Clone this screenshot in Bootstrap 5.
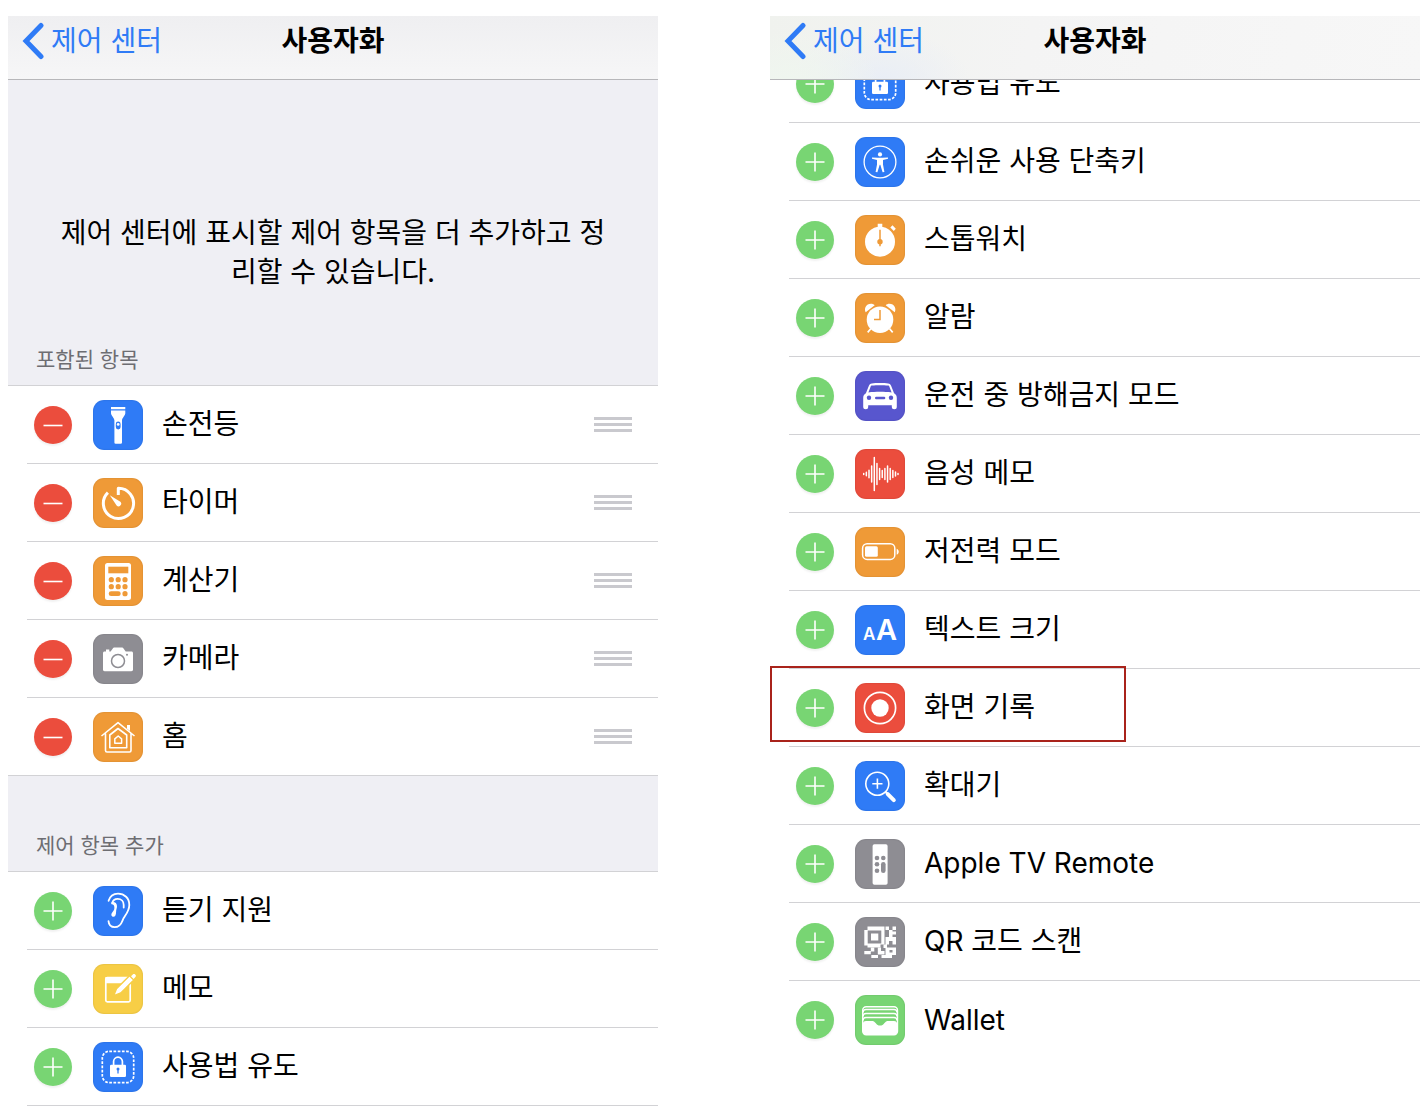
<!DOCTYPE html>
<html lang="ko">
<head>
<meta charset="utf-8">
<meta name="viewport" content="width=device-width, initial-scale=1">
<title>제어 센터 사용자화</title>
<link rel="stylesheet" href="https://cdn.jsdelivr.net/npm/bootstrap@5.3.0/dist/css/bootstrap.min.css">
<style>
  :root { --ios-blue:#2f7bf6; --ios-orange:#ef9a37; --ios-gray:#8e8d93; --ios-green:#78d573; --ios-red:#eb4d3d; --ios-indigo:#5856ce; --ios-yellow:#f7ce46; --hairline:#d2d2d5; }
  body { font-family: Inter, "Noto Sans CJK KR", sans-serif; color:#000; background:#fff; }
  .screens { height:100vh; gap:112px; padding:16px 0 0 8px; overflow:hidden; }
  .phone { flex:1 1 0; min-width:0; overflow:hidden; }
  .topbar { height:64px; background:linear-gradient(#efeff1,#f6f6f7); border-bottom:1px solid #b7b7ba; z-index:2; display:grid; grid-template-columns:1fr auto 1fr; align-items:start; padding:4px 14px 0; }
  .topbar-tinted { background:radial-gradient(ellipse 90px 50px at 20px 64px,#eff6ef,transparent),radial-gradient(ellipse 90px 50px at 110px 64px,#e9eef6,transparent),linear-gradient(100deg,#f0f2ee,#f4f4f4 40%,#f7f7f7); }
  .back-link { color:var(--ios-blue); font-size:28px; line-height:42px; gap:7px; }
  .screen-title { font-size:28px; line-height:42px; font-weight:600; }
  .panel-gray { background:#efeff4; border-bottom:1px solid var(--hairline); }
  .intro { height:306px; }
  .intro-text { font-size:28px; line-height:39px; padding-top:134px; }
  .group-label { font-size:21px; line-height:30px; font-weight:400; color:#6d6d72; padding:0 28px 10px; }
  .group-gap { height:96px; }
  .ctl-list > li { height:78px; margin-left:19px; padding-left:7px; border-bottom:1px solid var(--hairline); }
  .ctl-list.last-full > li:last-child { margin-left:0; padding-left:26px; }
  .ctl-list.last-none > li:last-child { border-bottom:0; }
  .ctl-list.scrolled { margin-top:-35px; }
  .round-btn { width:38px; height:38px; margin-right:21px; border-radius:50%; box-shadow:0 2px 2px #0000000f; }
  .round-btn svg, .app-icon { display:block; }
  .add-btn { background:var(--ios-green); }
  .remove-btn { background:var(--ios-red); }
  .app-icon { width:50px; height:50px; border-radius:11px; margin-right:19px; box-shadow:inset 0 0 1px 1px #0000000d; }
  .bg-blue { background:var(--ios-blue); color:var(--ios-blue); }
  .bg-orange { background:var(--ios-orange); color:var(--ios-orange); }
  .bg-gray { background:var(--ios-gray); color:var(--ios-gray); }
  .bg-green { background:var(--ios-green); color:var(--ios-green); }
  .bg-red { background:var(--ios-red); color:var(--ios-red); }
  .bg-indigo { background:var(--ios-indigo); color:var(--ios-indigo); }
  .bg-yellow { background:var(--ios-yellow); color:var(--ios-yellow); }
  .ctl-name { font-size:28px; line-height:40px; padding-bottom:1px; white-space:nowrap; }
  .grip { width:38px; height:15px; margin-right:26px; border:0; padding:0; background:repeating-linear-gradient(#c9c9ce 0 3px,transparent 3px 6px); }
  .callout { position:absolute; left:-19px; top:-3px; width:356px; height:76px; border:2px solid #a9231b; pointer-events:none; }
</style>
</head>
<body>
<svg width="0" height="0" class="d-none" aria-hidden="true">
  <symbol id="plus" viewBox="0 0 38 38"><path d="M9.500 19h19M19 9.500v19" stroke="#fff" stroke-width="1.600"/></symbol>
  <symbol id="minus" viewBox="0 0 38 38"><path d="M9.500 19.500h19" stroke="#fff" stroke-width="1.600"/></symbol>
  <symbol id="torch" viewBox="0 0 50 50"><path fill="#fff" d="M18 7h14.300v2.300H18zM18 10.600h14.300v2.700c0 2-3.300 5-3.300 7V42.500a1.300 1.300 0 0 1-1.300 1.300h-5a1.300 1.300 0 0 1-1.300-1.300V20.300c0-2-3.400-5-3.400-7z"/><rect x="22.800" y="21.500" width="4.800" height="8" rx="2.400" fill="currentColor"/><circle cx="25.200" cy="24.400" r="1.400" fill="#fff"/></symbol>
  <symbol id="timer" viewBox="0 0 50 50"><path d="M25.300 17v-6.700a15.100 15.100 0 1 1-10.400 4.300" fill="none" stroke="#fff" stroke-width="3" stroke-linejoin="round"/><path d="M16.800 17.300l10.600 6.500a2.500 2.500 0 1 1-3.800 3.700z" fill="#fff"/></symbol>
  <symbol id="calc" viewBox="0 0 50 50"><rect x="12" y="7" width="26" height="37" rx="2.500" fill="#fff"/><g fill="currentColor"><rect x="15.300" y="10.700" width="20" height="6.600"/><circle cx="18.300" cy="23.700" r="2.600"/><circle cx="25.200" cy="23.700" r="2.600"/><circle cx="32" cy="23.700" r="2.600"/><circle cx="18.300" cy="30.700" r="2.600"/><circle cx="25.200" cy="30.700" r="2.600"/><circle cx="32" cy="30.700" r="2.600"/><rect x="15.700" y="35.300" width="12" height="4.800" rx="2.400"/><circle cx="32" cy="37.700" r="2.600"/></g></symbol>
  <symbol id="camera" viewBox="0 0 50 50"><path fill="#fff" d="M11.700 17.500h1.300v-2h3.300v2h1.300l2.200-3c.5-.7.900-.9 1.700-.9h7.300c.8 0 1.200.2 1.700.9l2.200 3h5.600c1.200 0 1.700.7 1.700 1.700v16.400c0 1.100-.6 1.700-1.700 1.700H11.700c-1.100 0-1.700-.6-1.700-1.700V19.200c0-1.100.6-1.700 1.700-1.700z"/><circle cx="25" cy="27" r="6.500" fill="none" stroke="currentColor" stroke-width="1.500"/><circle cx="34" cy="20.700" r="1" fill="currentColor"/></symbol>
  <symbol id="home" viewBox="0 0 50 50"><g fill="none" stroke="#fff" stroke-width="1.600" stroke-linejoin="round"><path d="M8.500 24L25 10.600 41.500 24M12.500 21.500V38.500a1.500 1.500 0 0 0 1.500 1.500h22.500a1.500 1.500 0 0 0 1.500-1.500V21.500M16.800 23L25 16.500l8.700 6.500v12.700H16.800z"/><path stroke-width="1.500" d="M21.800 26.800L25.200 24l3.400 2.800v4.500h-6.800z"/></g><path fill="#fff" d="M34 13h3v6l-3-2.300z"/></symbol>
  <symbol id="ear" viewBox="0 0 50 50"><g fill="none" stroke="#fff" stroke-width="1.800" stroke-linecap="round"><path d="M15.600 14.800C17 10 20.300 7.600 25 7.600c6.500 0 11.300 4.600 11.300 11.300 0 5.600-3 9-5.600 13.100-1.700 2.800-2.200 9.200-9 9.200-3.600 0-5.900-2.600-6.200-6"/><path d="M19.200 17.200c.6-2.800 2.600-4.300 5.500-4.300 3.700 0 6 2.500 6 6.100v2.500"/></g><path fill="#fff" d="M18.500 16.300c3-.9 5.300.7 5.500 3.700.1 2-.9 3.600-.9 5.700 0 3-.8 5-2.800 5-1.900 0-2.400-2-1.600-3.500.7-1.300 2.700-2.600 2.700-5.200 0-2.300-.6-3.600-2.900-3.700z"/></symbol>
  <symbol id="memo" viewBox="0 0 50 50"><rect x="12.800" y="13.500" width="24.400" height="24.400" rx="1.600" fill="none" stroke="#fff" stroke-width="1.700"/><path d="M12.500 13h24v6.300h-24z" fill="#fff"/><path d="M20.800 31.600l2.700-6.900L36.500 11.700l4.300 4.300L27.800 29z" fill="#fff" stroke="currentColor" stroke-width="1.400"/><path d="M38 12.300l1.800-1.900c1.600-1.600 4.200 1 2.600 2.600L40.600 15z" fill="#fff"/></symbol>
  <symbol id="guided" viewBox="0 0 50 50"><rect x="9.300" y="9.300" width="31.400" height="31.400" rx="7" fill="none" stroke="#fff" stroke-width="1.700" stroke-dasharray="2.700 1.500"/><rect x="17" y="22.700" width="16" height="12.300" rx="1.300" fill="#fff"/><path d="M20.600 23v-3.400a4.400 4.400 0 0 1 8.800 0V23" fill="none" stroke="#fff" stroke-width="1.700"/><circle cx="25" cy="27" r="1.500" fill="currentColor"/><path d="M25 27v4.500" stroke="currentColor" stroke-width="1.300"/></symbol>
  <symbol id="access" viewBox="0 0 50 50"><circle cx="25" cy="25" r="15.900" fill="none" stroke="#fff" stroke-width="1.300"/><circle cx="25" cy="17.400" r="2.100" fill="#fff"/><path fill="#fff" d="M17 20.400l5.700.3h4.600l5.700-.3v1.400l-5 1.100v4.500l1.400 7.600-1.800.3-2.300-7.600h-.6l-2.300 7.600-1.800-.3 1.400-7.600v-4.500l-5-1.100z"/></symbol>
  <symbol id="stopwatch" viewBox="0 0 50 50"><circle cx="25" cy="26.700" r="15" fill="#fff"/><path fill="#fff" d="M22.700 8.800h4.600v5h-4.600zM35.300 12.500l2.200-2.200 3.300 3.500-2 2.200z"/><path d="M25 14.700v16.600" stroke="currentColor" stroke-width="1.500"/><circle cx="25" cy="26.700" r="2.700" fill="currentColor"/></symbol>
  <symbol id="alarm" viewBox="0 0 50 50"><circle cx="25" cy="26.700" r="13.300" fill="#fff"/><path d="M10.700 19.300c-2-3.500.3-8.600 5.300-8.600 1.500 0 2.700.5 3.700 1.500zM39.700 19.300c2-3.500-.3-8.600-5.300-8.600-1.500 0-2.700.5-3.700 1.500z" fill="#fff"/><path d="M16 35.500l-3.300 3.900M34.400 35.500l3.300 3.900" stroke="#fff" stroke-width="1.700"/><path d="M25 17v9.600h-6" fill="none" stroke="currentColor" stroke-width="1.500"/></symbol>
  <symbol id="car" viewBox="0 0 50 50"><path fill="#fff" fill-rule="evenodd" d="M16.800 12.500c4-.6 12.400-.6 16.400 0 1.600.2 2.400.9 3 2.400l2.900 7.300c2 1.300 2.700 2.500 2.700 4.900v8.700a2.500 2.500 0 0 1-5 0v-1.600H13.200v1.600a2.500 2.500 0 0 1-5 0v-8.700c0-2.400.7-3.600 2.700-4.900l2.900-7.300c.6-1.500 1.400-2.200 3-2.400zM17.200 14.600c-1 .1-1.300.4-1.700 1.400l-2.100 5.400c7-.8 16.200-.8 23.200 0L34.500 16c-.4-1-.7-1.300-1.700-1.400-4-.5-11.600-.5-15.600 0z"/><g fill="currentColor"><circle cx="14" cy="26.800" r="2.200"/><circle cx="36" cy="26.800" r="2.200"/><rect x="20" y="25.800" width="10.300" height="2.400" rx="1.200"/></g></symbol>
  <symbol id="wave" viewBox="0 0 50 50"><path stroke="#fff" stroke-width="1.500" stroke-linecap="round" d="M8.700 24.500v1M11.350 23.300v3.400M14 21.200v7.600M16.650 17v16M19.300 8.500v33M21.950 14.500v21M24.600 19.500v11M27.250 21.500v7M29.900 19.500v11M32.550 17v16M35.200 19.500v11M37.850 21.500v7M40.500 23v4M43 24.500v1"/></symbol>
  <symbol id="battery" viewBox="0 0 50 50"><rect x="7.600" y="16.800" width="32.200" height="15.600" rx="4.500" fill="none" stroke="#fff" stroke-width="1.500"/><rect x="10" y="19.300" width="12.800" height="10.500" rx="1.500" fill="#fff"/><path d="M41.700 21.700c2.700 1 2.700 5 0 6z" fill="#fff"/></symbol>
  <symbol id="textsize" viewBox="0 0 50 50"><text x="8" y="35" font-family="Inter, sans-serif" font-weight="600" font-size="17" fill="#fff">A</text><text x="21" y="35" font-family="Inter, sans-serif" font-weight="600" font-size="29" fill="#fff">A</text></symbol>
  <symbol id="record" viewBox="0 0 50 50"><circle cx="25" cy="25" r="15.600" fill="none" stroke="#fff" stroke-width="1.700"/><circle cx="25" cy="25" r="8.700" fill="#fff"/></symbol>
  <symbol id="magnify" viewBox="0 0 50 50"><circle cx="22.300" cy="22.700" r="11.500" fill="none" stroke="#fff" stroke-width="1.600"/><path d="M17.300 22.700h10.200M22.400 17.600v10.200" stroke="#fff" stroke-width="1.600"/><path d="M30.300 30.700l2 2" stroke="#fff" stroke-width="2"/><path d="M32.800 33.200l6 6" stroke="#fff" stroke-width="4" stroke-linecap="round"/></symbol>
  <symbol id="remote" viewBox="0 0 50 50"><rect x="17.600" y="5.300" width="15" height="40.400" rx="1.800" fill="#fff"/><g fill="currentColor"><circle cx="22" cy="19" r="2.300"/><circle cx="28.300" cy="19" r="2.300"/><circle cx="22" cy="25.300" r="2.300"/><circle cx="22" cy="31.700" r="2.300"/><rect x="26" y="23" width="4.600" height="11" rx="2.300"/></g></symbol>
  <symbol id="qr" viewBox="0 0 50 50"><path fill="#fff" fill-rule="evenodd" d="M12.500 9.500H29.500V27.500H25.500V30.500H12.500V28.500H9.300V13H12.500zM12.700 13.500V26.500H26.300V13.500zM16 16.500H23.300V23.500H16z"/><path fill="#fff" d="M30.500 9.500h3.500V13h-3.500zM37.500 9.500h3.500V13h-3.500zM34 13h3.500v3.500H34zM37.500 14.500h3.500v3h-3.500zM30.500 20h3.500v-3.500h3.500V20H41v7.500h-3.500V24H34v3.500h-3.500zM9.300 34h6.500v3.300H9.300zM15.800 30.500h3.500v4h-3.500zM22.800 30.500H26v3.500h3.500v3.500h-6.700zM16.300 38h6.700v3h-6.700zM26.500 38h10.500v3H26.500zM28.500 27.500h3.500V31h-3.500z"/><path fill="#fff" fill-rule="evenodd" d="M30.500 30.500H41V38H30.500zM34.500 33v2.500h3V33z"/></symbol>
  <symbol id="wallet" viewBox="0 0 50 50"><rect x="7.700" y="11.700" width="34.800" height="28" rx="3.500" fill="none" stroke="#fff" stroke-width="1.400"/><path d="M8 17.500c0-2 1-3 3-3h28c2 0 3 1 3 3M8 21.500c0-2 1-3 3-3h28c2 0 3 1 3 3M8 25.500c0-2 1-3 3-3h28c2 0 3 1 3 3" fill="none" stroke="#fff" stroke-width="1.400"/><path fill="#fff" d="M8 28c.4-1.300 1.300-2 3-2h6.600c2.600 0 3.600 4.600 7.500 4.600s4.800-4.600 7.400-4.600H39c1.700 0 2.600.7 3 2v9.500a2 2 0 0 1-2 2H10a2 2 0 0 1-2-2z"/></symbol>
  <symbol id="chevron" viewBox="0 0 22 38"><path d="M19 3.500L4 19l15 15.500" fill="none" stroke="currentColor" stroke-width="5" stroke-linecap="round" stroke-linejoin="miter"/></symbol>
  <symbol id="blank" viewBox="0 0 50 50"></symbol>
</svg>

<main class="screens d-flex">
  <section class="phone">
    <header class="topbar position-relative">
      <a href="#" class="back-link d-flex align-items-center text-decoration-none"><svg width="22" height="38"><use href="#chevron"/></svg>제어 센터</a>
      <h1 class="screen-title m-0">사용자화</h1>
    </header>
    <div class="panel-gray intro d-flex flex-column justify-content-between">
      <p class="intro-text text-center m-0">제어 센터에 표시할 제어 항목을 더 추가하고 정<br>리할 수 있습니다.</p>
      <h2 class="group-label m-0">포함된 항목</h2>
    </div>
    <ul class="ctl-list last-full list-unstyled m-0">
      <li class="d-flex align-items-center"><button type="button" class="round-btn remove-btn btn p-0 border-0" aria-label="손전등 제거"><svg width="38" height="38"><use href="#minus"/></svg></button><svg class="app-icon bg-blue"><use href="#torch"/></svg><span class="ctl-name">손전등</span><button type="button" class="grip ms-auto" aria-label="순서 변경"></button></li>
      <li class="d-flex align-items-center"><button type="button" class="round-btn remove-btn btn p-0 border-0" aria-label="타이머 제거"><svg width="38" height="38"><use href="#minus"/></svg></button><svg class="app-icon bg-orange"><use href="#timer"/></svg><span class="ctl-name">타이머</span><button type="button" class="grip ms-auto" aria-label="순서 변경"></button></li>
      <li class="d-flex align-items-center"><button type="button" class="round-btn remove-btn btn p-0 border-0" aria-label="계산기 제거"><svg width="38" height="38"><use href="#minus"/></svg></button><svg class="app-icon bg-orange"><use href="#calc"/></svg><span class="ctl-name">계산기</span><button type="button" class="grip ms-auto" aria-label="순서 변경"></button></li>
      <li class="d-flex align-items-center"><button type="button" class="round-btn remove-btn btn p-0 border-0" aria-label="카메라 제거"><svg width="38" height="38"><use href="#minus"/></svg></button><svg class="app-icon bg-gray"><use href="#camera"/></svg><span class="ctl-name">카메라</span><button type="button" class="grip ms-auto" aria-label="순서 변경"></button></li>
      <li class="d-flex align-items-center"><button type="button" class="round-btn remove-btn btn p-0 border-0" aria-label="홈 제거"><svg width="38" height="38"><use href="#minus"/></svg></button><svg class="app-icon bg-orange"><use href="#home"/></svg><span class="ctl-name">홈</span><button type="button" class="grip ms-auto" aria-label="순서 변경"></button></li>
    </ul>
    <div class="panel-gray group-gap d-flex align-items-end">
      <h2 class="group-label m-0">제어 항목 추가</h2>
    </div>
    <ul class="ctl-list list-unstyled m-0">
      <li class="d-flex align-items-center"><button type="button" class="round-btn add-btn btn p-0 border-0" aria-label="듣기 지원 추가"><svg width="38" height="38"><use href="#plus"/></svg></button><svg class="app-icon bg-blue"><use href="#ear"/></svg><span class="ctl-name">듣기 지원</span></li>
      <li class="d-flex align-items-center"><button type="button" class="round-btn add-btn btn p-0 border-0" aria-label="메모 추가"><svg width="38" height="38"><use href="#plus"/></svg></button><svg class="app-icon bg-yellow"><use href="#memo"/></svg><span class="ctl-name">메모</span></li>
      <li class="d-flex align-items-center"><button type="button" class="round-btn add-btn btn p-0 border-0" aria-label="사용법 유도 추가"><svg width="38" height="38"><use href="#plus"/></svg></button><svg class="app-icon bg-blue"><use href="#guided"/></svg><span class="ctl-name">사용법 유도</span></li>
      <li class="d-flex align-items-center"><span class="round-btn invisible"></span><svg class="app-icon bg-blue"><use href="#blank"/></svg></li>
    </ul>
  </section>

  <section class="phone">
    <header class="topbar topbar-tinted position-relative">
      <a href="#" class="back-link d-flex align-items-center text-decoration-none"><svg width="22" height="38"><use href="#chevron"/></svg>제어 센터</a>
      <h1 class="screen-title m-0">사용자화</h1>
    </header>
    <ul class="ctl-list scrolled last-none list-unstyled mb-0">
      <li class="d-flex align-items-center"><button type="button" class="round-btn add-btn btn p-0 border-0" aria-label="사용법 유도 추가"><svg width="38" height="38"><use href="#plus"/></svg></button><svg class="app-icon bg-blue"><use href="#guided"/></svg><span class="ctl-name">사용법 유도</span></li>
      <li class="d-flex align-items-center"><button type="button" class="round-btn add-btn btn p-0 border-0" aria-label="손쉬운 사용 단축키 추가"><svg width="38" height="38"><use href="#plus"/></svg></button><svg class="app-icon bg-blue"><use href="#access"/></svg><span class="ctl-name">손쉬운 사용 단축키</span></li>
      <li class="d-flex align-items-center"><button type="button" class="round-btn add-btn btn p-0 border-0" aria-label="스톱워치 추가"><svg width="38" height="38"><use href="#plus"/></svg></button><svg class="app-icon bg-orange"><use href="#stopwatch"/></svg><span class="ctl-name">스톱워치</span></li>
      <li class="d-flex align-items-center"><button type="button" class="round-btn add-btn btn p-0 border-0" aria-label="알람 추가"><svg width="38" height="38"><use href="#plus"/></svg></button><svg class="app-icon bg-orange"><use href="#alarm"/></svg><span class="ctl-name">알람</span></li>
      <li class="d-flex align-items-center"><button type="button" class="round-btn add-btn btn p-0 border-0" aria-label="운전 중 방해금지 모드 추가"><svg width="38" height="38"><use href="#plus"/></svg></button><svg class="app-icon bg-indigo"><use href="#car"/></svg><span class="ctl-name">운전 중 방해금지 모드</span></li>
      <li class="d-flex align-items-center"><button type="button" class="round-btn add-btn btn p-0 border-0" aria-label="음성 메모 추가"><svg width="38" height="38"><use href="#plus"/></svg></button><svg class="app-icon bg-red"><use href="#wave"/></svg><span class="ctl-name">음성 메모</span></li>
      <li class="d-flex align-items-center"><button type="button" class="round-btn add-btn btn p-0 border-0" aria-label="저전력 모드 추가"><svg width="38" height="38"><use href="#plus"/></svg></button><svg class="app-icon bg-orange"><use href="#battery"/></svg><span class="ctl-name">저전력 모드</span></li>
      <li class="d-flex align-items-center"><button type="button" class="round-btn add-btn btn p-0 border-0" aria-label="텍스트 크기 추가"><svg width="38" height="38"><use href="#plus"/></svg></button><svg class="app-icon bg-blue"><use href="#textsize"/></svg><span class="ctl-name">텍스트 크기</span></li>
      <li class="d-flex align-items-center position-relative"><span class="callout"></span><button type="button" class="round-btn add-btn btn p-0 border-0" aria-label="화면 기록 추가"><svg width="38" height="38"><use href="#plus"/></svg></button><svg class="app-icon bg-red"><use href="#record"/></svg><span class="ctl-name">화면 기록</span></li>
      <li class="d-flex align-items-center"><button type="button" class="round-btn add-btn btn p-0 border-0" aria-label="확대기 추가"><svg width="38" height="38"><use href="#plus"/></svg></button><svg class="app-icon bg-blue"><use href="#magnify"/></svg><span class="ctl-name">확대기</span></li>
      <li class="d-flex align-items-center"><button type="button" class="round-btn add-btn btn p-0 border-0" aria-label="Apple TV Remote 추가"><svg width="38" height="38"><use href="#plus"/></svg></button><svg class="app-icon bg-gray"><use href="#remote"/></svg><span class="ctl-name">Apple TV Remote</span></li>
      <li class="d-flex align-items-center"><button type="button" class="round-btn add-btn btn p-0 border-0" aria-label="QR 코드 스캔 추가"><svg width="38" height="38"><use href="#plus"/></svg></button><svg class="app-icon bg-gray"><use href="#qr"/></svg><span class="ctl-name">QR 코드 스캔</span></li>
      <li class="d-flex align-items-center"><button type="button" class="round-btn add-btn btn p-0 border-0" aria-label="Wallet 추가"><svg width="38" height="38"><use href="#plus"/></svg></button><svg class="app-icon bg-green"><use href="#wallet"/></svg><span class="ctl-name">Wallet</span></li>
    </ul>
  </section>
</main>
<script src="https://cdn.jsdelivr.net/npm/bootstrap@5.3.0/dist/js/bootstrap.bundle.min.js"></script>
</body>
</html>
